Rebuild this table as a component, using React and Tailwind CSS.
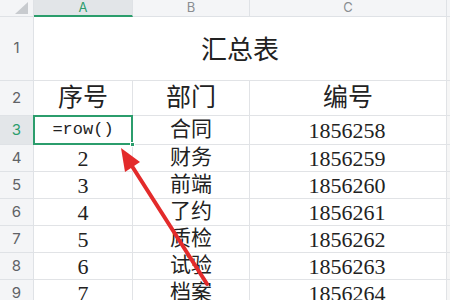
import React from "react";

const rows = [
    { n: 3, a: "=row()", b: "合同", c: "1856258", h: "h-[29px]" },
    { n: 4, a: "2", b: "财务", c: "1856259", h: "h-[27px]" },
    { n: 5, a: "3", b: "前端", c: "1856260", h: "h-[27px]" },
    { n: 6, a: "4", b: "了约", c: "1856261", h: "h-[27px]" },
    { n: 7, a: "5", b: "质检", c: "1856262", h: "h-[27px]" },
    { n: 8, a: "6", b: "试验", c: "1856263", h: "h-[27px]" },
    { n: 9, a: "7", b: "档案", c: "1856264", h: "h-[27px]" },
];

const sans = "font-['Inter','Noto_Sans',sans-serif]";
const cjk = "font-['Liberation_Serif','Noto_Sans_CJK_SC',serif]";

const RowHead = ({ children, active, className = "" }) => (
    <div className={`flex items-center justify-center border-r border-b border-[#dfe2e6] text-[15px] ${sans} ${active ? "bg-[#e3e6e9] text-[#2b9d6c]" : "bg-[#f4f5f7] text-[#606266]"} ${className}`}>
        {children}
    </div>
);

const Cell = ({ children, className = "" }) => (
    <div className={`flex items-center justify-center border-r border-b border-[#e1e3e6] text-[#222] ${className}`}>
        {children}
    </div>
);

export default function App() {
    return (
        <div className="relative w-[450px] h-[300px] overflow-hidden bg-white">
            <div className="grid grid-cols-[34px_99px_117px_197px_1fr]">
                {/* column header */}
                <div className="relative h-[17px] bg-[#f4f5f7] border-r border-b border-[#dfe2e6]">
                    <svg className="absolute left-[15px] top-[2px]" width="13" height="12" viewBox="0 0 13 12">
                        <polygon points="13,0 13,12 0,12" fill="#c8cbcf" />
                    </svg>
                </div>
                <div className={`h-[17px] flex items-start justify-center bg-[#e2e5e8] border-r border-b-2 border-b-[#2b9d6c] border-r-[#dfe2e6] text-[13px] leading-[14px] text-[#2b9d6c] ${sans}`}>A</div>
                <div className={`h-[17px] flex items-start justify-center bg-[#f4f5f7] border-r border-b border-[#dfe2e6] text-[13px] leading-[14px] text-[#8a8d91] ${sans}`}>B</div>
                <div className={`h-[17px] flex items-start justify-center bg-[#f4f5f7] border-r border-b border-[#dfe2e6] text-[13px] leading-[14px] text-[#8a8d91] ${sans}`}>C</div>
                <div className="h-[17px] bg-[#f4f5f7] border-b border-[#dfe2e6]"></div>

                {/* row 1 */}
                <RowHead className="h-[64px]">1</RowHead>
                <Cell className={`col-span-3 h-[64px] pt-[4px] text-[26px] ${cjk}`}>汇总表</Cell>
                <div className="h-[64px] bg-[#f6f6f6] border-b border-[#e1e3e6]"></div>

                {/* row 2 */}
                <RowHead className="h-[35px]">2</RowHead>
                <Cell className={`h-[35px] text-[25px] ${cjk}`}>序号</Cell>
                <Cell className={`h-[35px] text-[25px] ${cjk}`}>部门</Cell>
                <Cell className={`h-[35px] text-[25px] ${cjk}`}>编号</Cell>
                <div className="h-[35px] bg-[#f6f6f6] border-b border-[#e1e3e6]"></div>

                {rows.map((r) => (
                    <React.Fragment key={r.n}>
                        <RowHead active={r.n === 3} className={r.h}>{r.n}</RowHead>
                        {r.n === 3 ? (
                            <Cell className={`relative ${r.h} text-[17px] font-['Liberation_Mono',monospace]`}>
                                {r.a}
                                <div className="absolute -left-px -top-px -right-px -bottom-px border-2 border-[#2b9d6c]"></div>
                                <div className="absolute -right-[3px] -bottom-[3px] w-[5px] h-[5px] bg-[#2b9d6c] border border-white"></div>
                            </Cell>
                        ) : (
                            <Cell className={`${r.h} text-[22px] font-['Liberation_Serif',serif]`}>{r.a}</Cell>
                        )}
                        <Cell className={`${r.h} text-[21px] ${cjk}`}>{r.b}</Cell>
                        <Cell className={`${r.h} pr-[2px] text-[22px] font-['Liberation_Serif',serif]`}>{r.c}</Cell>
                        <div className={`${r.h} bg-[#f6f6f6] border-b border-[#e1e3e6]`}></div>
                    </React.Fragment>
                ))}
            </div>

            {/* red arrow */}
            <svg className="absolute left-0 top-0" width="450" height="300" viewBox="0 0 450 300">
                <line x1="207" y1="284" x2="130" y2="163" stroke="#e32b2b" strokeWidth="4" strokeLinecap="round" />
                <polygon points="121,148 140,162 125,172" fill="#e32b2b" />
            </svg>
        </div>
    );
}
